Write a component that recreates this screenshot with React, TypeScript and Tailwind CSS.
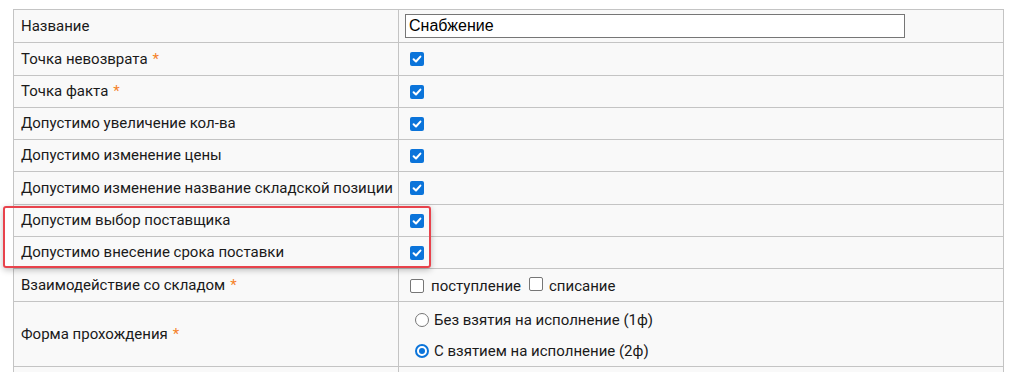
import React from 'react';

const font = { fontFamily: 'Roboto, "Noto Sans", sans-serif' };

function Star() {
  return <span className="ml-[5px] text-[#f5822a]">*</span>;
}

function Checked() {
  return (
    <span className="ml-[5px] inline-flex h-[14px] w-[14px] items-center justify-center rounded-[2px] bg-[#0b74da]">
      <svg width="10" height="10" viewBox="0 0 10 10">
        <path d="M1.6 5.2 L4 7.5 L8.4 2.6" fill="none" stroke="#fff" strokeWidth="2" strokeLinecap="round" strokeLinejoin="round" />
      </svg>
    </span>
  );
}

function Unchecked() {
  return <span className="inline-block h-[14px] w-[14px] rounded-[2px] border border-[#767676] bg-white" />;
}

function Radio({ on }: { on?: boolean }) {
  return on ? (
    <span className="inline-flex h-[14px] w-[14px] items-center justify-center rounded-full border-2 border-[#0b74da] bg-white">
      <span className="h-[6px] w-[6px] rounded-full bg-[#0b74da]" />
    </span>
  ) : (
    <span className="inline-block h-[14px] w-[14px] rounded-full border border-[#767676] bg-white" />
  );
}

const rows: { label: string; star?: boolean; h: string }[] = [
  { label: 'Точка невозврата', star: true, h: 'h-[33px]' },
  { label: 'Точка факта', star: true, h: 'h-[32px]' },
  { label: 'Допустимо увеличение кол-ва', h: 'h-[32px]' },
  { label: 'Допустимо изменение цены', h: 'h-[32px]' },
  { label: 'Допустимо изменение название складской позиции', h: 'h-[33px]' },
  { label: 'Допустим выбор поставщика', h: 'h-[32px]' },
  { label: 'Допустимо внесение срока поставки', h: 'h-[32px]' },
];

export default function App() {
  return (
    <div className="relative h-[372px] w-[1013px] overflow-hidden bg-white text-[15px] text-[#1a1a1a]" style={font}>
      <div className="ml-[13px] mt-[9px] w-[991px] border-l border-t border-[#c4c4c4] bg-[#f9f9f9]">
        {/* Название */}
        <div className="flex h-[33px] border-b border-[#c4c4c4]">
          <div className="flex w-[385px] items-center border-r border-[#c4c4c4] pl-[7px]">Название</div>
          <div className="flex flex-1 items-center border-r border-[#c4c4c4] pl-[6px]">
            <div
              className="flex h-[24px] w-[500px] items-center border border-[#767676] bg-white pl-[3px] text-[16px] text-black"
              style={{ fontFamily: '"Liberation Sans", Arial, sans-serif' }}
            >
              Снабжение
            </div>
          </div>
        </div>

        {rows.map((r) => (
          <div key={r.label} className={`flex ${r.h} border-b border-[#c4c4c4]`}>
            <div className="flex w-[385px] items-center border-r border-[#c4c4c4] pl-[7px]">
              {r.label}
              {r.star && <Star />}
            </div>
            <div className="flex flex-1 items-center border-r border-[#c4c4c4] pl-[6px]">
              <Checked />
            </div>
          </div>
        ))}

        {/* Взаимодействие со складом */}
        <div className="flex h-[33px] border-b border-[#c4c4c4]">
          <div className="flex w-[385px] items-center border-r border-[#c4c4c4] pl-[7px]">
            Взаимодействие со складом
            <Star />
          </div>
          <div className="flex flex-1 items-center border-r border-[#c4c4c4] pl-[11px] pt-[2px]">
            <Unchecked />
            <span className="ml-[7px]">поступление</span>
            <span className="ml-[8px]"><Unchecked /></span>
            <span className="ml-[6px]">списание</span>
          </div>
        </div>

        {/* Форма прохождения */}
        <div className="flex h-[65px] border-b border-[#c4c4c4]">
          <div className="flex w-[385px] items-center border-r border-[#c4c4c4] pl-[7px]">
            Форма прохождения
            <Star />
          </div>
          <div className="flex flex-1 flex-col justify-center gap-[8px] border-r border-[#c4c4c4] pl-[16px] pt-[3px]">
            <div className="flex items-center gap-[5px]">
              <Radio />
              <span>Без взятия на исполнение (1ф)</span>
            </div>
            <div className="flex items-center gap-[5px]">
              <Radio on />
              <span>С взятием на исполнение (2ф)</span>
            </div>
          </div>
        </div>

        <div className="flex h-[33px]">
          <div className="w-[385px] border-r border-[#c4c4c4]" />
          <div className="flex-1 border-r border-[#c4c4c4]" />
        </div>
      </div>

      {/* Highlight frame over two rows */}
      <div className="pointer-events-none absolute left-[3px] top-[206px] h-[62px] w-[428px] rounded-[3px] border-2 border-[#e8434c] shadow-[0_2px_6px_rgba(0,0,0,0.25)]" />
    </div>
  );
}
